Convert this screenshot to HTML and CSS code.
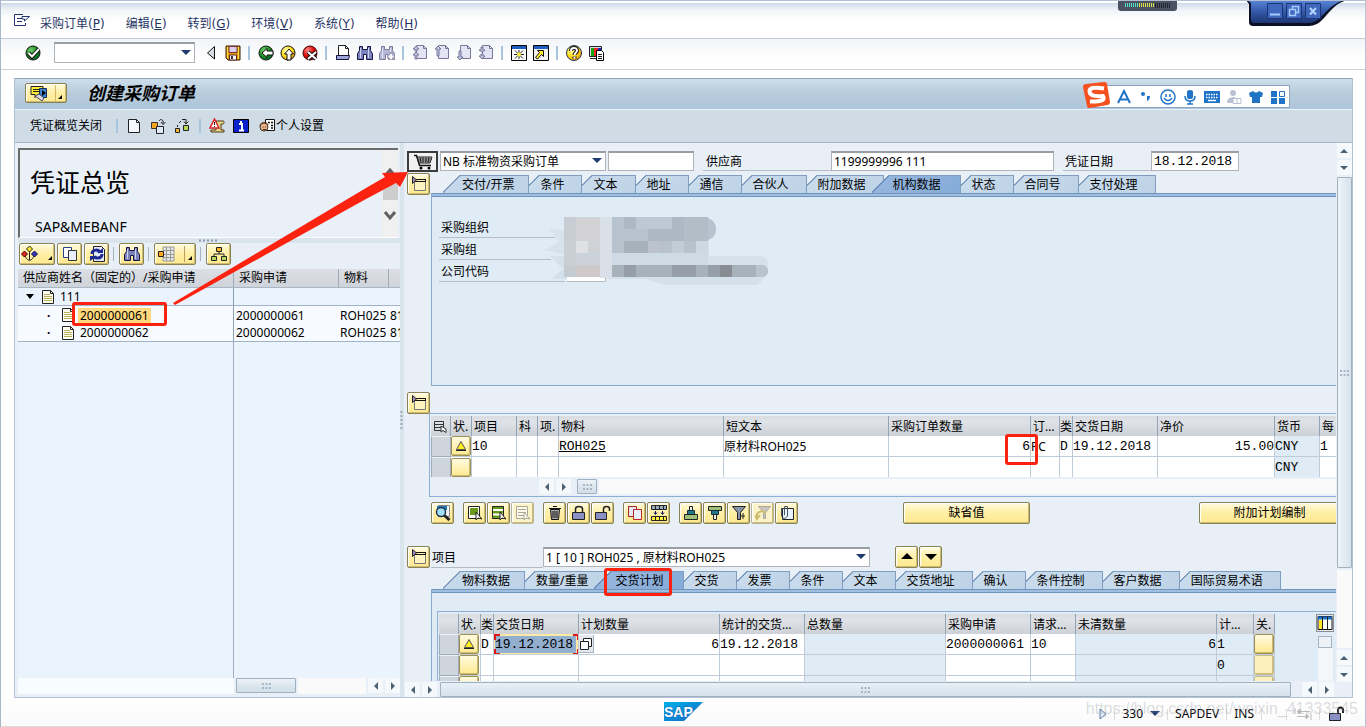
FILE: index.html
```html
<!DOCTYPE html>
<html lang="zh-CN">
<head>
<meta charset="utf-8">
<title>创建采购订单</title>
<link rel="stylesheet" href="styles.css">
</head>
<body>
<svg class="defs" aria-hidden="true">
  <defs>
    <radialGradient id="gG" cx=".35" cy=".3" r=".8"><stop offset="0" stop-color="#6fd06f"/><stop offset=".6" stop-color="#16861c"/><stop offset="1" stop-color="#063"/></radialGradient>
    <radialGradient id="gY" cx=".35" cy=".3" r=".8"><stop offset="0" stop-color="#fffbb0"/><stop offset=".5" stop-color="#ffe11a"/><stop offset="1" stop-color="#e08a00"/></radialGradient>
    <radialGradient id="gR" cx=".35" cy=".3" r=".8"><stop offset="0" stop-color="#ff8a8a"/><stop offset=".5" stop-color="#e01010"/><stop offset="1" stop-color="#900"/></radialGradient>
    <linearGradient id="gWin" x2="0" y2="1"><stop offset="0" stop-color="#5a87d8"/><stop offset=".5" stop-color="#3459a8"/><stop offset="1" stop-color="#1e3673"/></linearGradient>
    <linearGradient id="gSap" x2="1" y2="1"><stop offset="0" stop-color="#00b1eb"/><stop offset="1" stop-color="#1568be"/></linearGradient>
    <symbol id="folder" viewBox="0 0 16 16"><path d="M3.500 5.500h11v9h-11z" fill="#fdf3c0" stroke="#777"/><path d="M5 3.500h10M3 5.500h12M14.500 3v3" stroke="#111"/><path d="M1.500.500v7l4-3.500z" fill="#a58bb8" stroke="#222"/></symbol>
    <symbol id="page" viewBox="0 0 14 14"><path d="M1.500.5h8l3 3v10h-11z" fill="#fffef0" stroke="#222"/><path d="M3 4.500h6M3 6.500h8M3 8.500h8M3 10.500h8" stroke="#b8ae5c"/><path d="M9.500.5v3h3" fill="none" stroke="#222"/></symbol>
    <symbol id="warn" viewBox="0 0 12 12"><path d="M6 1.500L10.500 9.500h-9z" fill="#ffee20" stroke="#555" stroke-linejoin="round"/><path d="M1 10.500h10" stroke="#222"/></symbol>
    <symbol id="bino" viewBox="0 0 16 16"><path d="M2.500 1.500h3v3h5v-3h3v4l2 3v6h-6v-5h-3v5h-6v-6l2-3z" fill="#7c83b8" stroke="#15154a"/><path d="M3.500 3v10M11.500 3v10" stroke="#ccd2f2"/></symbol>
    <symbol id="copy" viewBox="0 0 16 16"><path d="M1.500 1.500h8v10h-8z" fill="#fff" stroke="#24428a"/><path d="M6.500 4.500h8v10h-8z" fill="#e8eefc" stroke="#333"/></symbol>
    <symbol id="copyr" viewBox="0 0 16 16"><path d="M1.500 1.500h8v10h-8z" fill="#e3e6f3" stroke="#a22"/><path d="M6.500 4.500h8v10h-8z" fill="#e9effc" stroke="#b22"/></symbol>
    <symbol id="sheet" viewBox="0 0 16 16"><path d="M4.500.500h7l3 3v10h-10z" fill="#e4e4f4" stroke="#77779a"/><path d="M11.500.500v3h3" fill="none" stroke="#77779a"/></symbol>
    <symbol id="left" viewBox="0 0 14 14"><path d="M9 3v8L5 7z" fill="#4d6272"/></symbol>
    <symbol id="right" viewBox="0 0 14 14"><path d="M5 3v8l4-4z" fill="#4d6272"/></symbol>
    <symbol id="up" viewBox="0 0 14 14"><path d="M3 9h8L7 5z" fill="#4d6272"/></symbol>
    <symbol id="down" viewBox="0 0 14 14"><path d="M3 5h8L7 9z" fill="#4d6272"/></symbol>
    <symbol id="caret" viewBox="0 0 10 6"><path d="M0 0h10L5 5z" fill="#203a72"/></symbol>
    <symbol id="grip" viewBox="0 0 9 6"><path d="M0 1h9M0 5h9" stroke="#a5b5c3" stroke-width="2" stroke-dasharray="2 1.500"/></symbol>
  </defs>
</svg>

<nav class="menubar">
  <svg class="exit" viewBox="0 0 16 13"><path d="M9 .5H.5v11h11V9M3 4.500h7M3 7.500h5" fill="none" stroke="#22366c"/><path d="M8 2.500h7.500L10.500 7V5H8z" fill="#fff" stroke="#22366c"/></svg>
  <a href="#">采购订单(<u>P</u>)</a><a href="#">编辑(<u>E</u>)</a><a href="#">转到(<u>G</u>)</a><a href="#">环境(<u>V</u>)</a><a href="#">系统(<u>Y</u>)</a><a href="#">帮助(<u>H</u>)</a>
</nav>

<div class="toolbar">
  <button class="ic" aria-label="确认"><svg viewBox="0 0 16 16"><circle cx="8" cy="8" r="7" fill="url(#gG)" stroke="#111"/><path d="M3.500 8l3.500 3.500L14 4" fill="none" stroke="#111" stroke-width="4"/><path d="M3.500 8l3.500 3.500L14 4" fill="none" stroke="#fff" stroke-width="2"/></svg></button>
  <span class="combo cmd"><input aria-label="命令"><svg class="arr"><use href="#caret"/></svg></span>
  <button class="ic" aria-label="收起"><svg viewBox="0 0 16 16"><path d="M11.500 1.500v12.500L4.500 8z" fill="#d8dde4" stroke="#111"/></svg></button>
  <button class="ic" aria-label="保存"><svg viewBox="0 0 16 16"><path d="M1 1h14v14H3l-2-2z" fill="#e79a12" stroke="#3a1d00"/><path d="M4 1.500h8v6H4z" fill="#dcd0ee" stroke="#733"/><path d="M4.500 10h7v5h-7z" fill="#fff" stroke="#522"/><path d="M6 11h2v3H6z" fill="#333"/><path d="M2.500 2v11M13.500 2v12" stroke="#ffe34a"/></svg></button>
  <i class="sep"></i>
  <button class="ic" aria-label="返回"><svg viewBox="0 0 16 16"><circle cx="8" cy="8" r="7" fill="url(#gG)" stroke="#111"/><path d="M4 8l5-4.500v2.500h6v4H9v2.500z" fill="#fff" stroke="#111"/></svg></button>
  <button class="ic" aria-label="退出"><svg viewBox="0 0 16 16"><circle cx="8" cy="8" r="7" fill="url(#gY)" stroke="#111"/><path d="M9 4l4.500 5H11v6H7V9H4.500z" fill="#fff" stroke="#111"/></svg></button>
  <button class="ic" aria-label="取消"><svg viewBox="0 0 16 16"><circle cx="8" cy="8" r="7" fill="url(#gR)" stroke="#400"/><path d="M6 7l8 7M14 7l-8 7" stroke="#111" stroke-width="4"/><path d="M6 7l8 7M14 7l-8 7" stroke="#fff" stroke-width="2"/></svg></button>
  <i class="sep"></i>
  <button class="ic" aria-label="打印"><svg viewBox="0 0 16 16"><path d="M3.500.500h7l3 3v7h-10z" fill="#fff" stroke="#222"/><path d="M10.500.500v3h3" fill="none" stroke="#222"/><path d="M1.500 10.500h13l-1 4h-12z" fill="#9fa5dc" stroke="#15153a"/></svg></button>
  <button class="ic" aria-label="查找"><svg><use href="#bino"/></svg></button>
  <button class="ic dim" aria-label="查找下一个"><svg viewBox="0 0 16 16"><use href="#bino" width="16" height="16"/><path d="M12 7v8M8 11.500h8" stroke="#558" stroke-width="4"/><path d="M12 9v5M9.500 11.500h5" stroke="#fff" stroke-width="2"/></svg></button>
  <i class="sep"></i>
  <button class="ic" aria-label="第一页"><svg viewBox="0 0 16 16"><use href="#sheet" width="16" height="16"/><path d="M4 1l3 3H5v2H3V4H1zM4 7l3 3H5v4H3v-4H1z" fill="#c4c4de" stroke="#77779a"/></svg></button>
  <button class="ic" aria-label="上一页"><svg viewBox="0 0 16 16"><use href="#sheet" width="16" height="16"/><path d="M4 1l3 3H5v7H3V4H1z" fill="#c4c4de" stroke="#77779a"/></svg></button>
  <button class="ic" aria-label="下一页"><svg viewBox="0 0 16 16"><use href="#sheet" width="16" height="16"/><path d="M4 15l3-3H5V6H3v6H1z" fill="#c4c4de" stroke="#77779a"/></svg></button>
  <button class="ic" aria-label="最后一页"><svg viewBox="0 0 16 16"><use href="#sheet" width="16" height="16"/><path d="M4 14l3-3H5V9H3v2H1zM4 7l3-2H5V2H3v3H1z" fill="#c4c4de" stroke="#77779a"/></svg></button>
  <i class="sep"></i>
  <button class="ic" aria-label="新会话"><svg viewBox="0 0 16 16"><path d="M.5.5h15v15H.5z" fill="#fff" stroke="#000"/><path d="M1 1h14v3H1z" fill="#1c5fc0"/><path d="M8 5v9M3 9.500h10M4 5.500l8 8M12 5.500l-8 8" stroke="#222"/><circle cx="8" cy="9.500" r="2" fill="#ffef3a"/></svg></button>
  <button class="ic" aria-label="快捷方式"><svg viewBox="0 0 16 16"><path d="M.5.5h15v15H.5z" fill="#f2f2f2" stroke="#000"/><path d="M1 1h14v3H1z" fill="#1c5fc0"/><path d="M4.500 5.500h6v6L8.500 9.500 4.500 14l-2-1.500L6.500 7.500z" fill="#ffee30" stroke="#111"/></svg></button>
  <i class="sep"></i>
  <button class="ic" aria-label="帮助"><svg viewBox="0 0 16 16"><circle cx="8" cy="8" r="7.500" fill="url(#gY)" stroke="#24355c"/><path d="M5 6c0-4 6-4 6-.5C11 8 8.500 7.500 8.500 10M8.500 11.500v2" fill="none" stroke="#111" stroke-width="4"/><path d="M5 6c0-4 6-4 6-.5C11 8 8.500 7.500 8.500 10M8.500 11.500v2" fill="none" stroke="#fff" stroke-width="2"/></svg></button>
  <button class="ic" aria-label="自定义布局"><svg viewBox="0 0 16 16"><path d="M1.500 1.500h12v10h-12zM2 13.500h8" fill="#ddd" stroke="#222"/><path d="M3 3h3v8H3z" fill="#12a512"/><path d="M6 3h4v8H6z" fill="#e22"/><path d="M10 3h3v8h-3z" fill="#22c"/><path d="M8.500 5.500h5l2 2v8h-7z" fill="#fff" stroke="#000"/><path d="M10 9.500h4M10 11.500h4M10 13.500h4" stroke="#222"/></svg></button>
</div>

<main class="panel">
  <header class="titlebar">
    <button class="yb svc" aria-label="服务"><svg viewBox="0 0 32 16"><path d="M1 1.500h12v8H8l-3 3v-3H1z" fill="#ffee35" stroke="#222"/><path d="M3 4.500h8M3 6.500h6" stroke="#222"/><path d="M9.500 3.500h7v9h-7z" fill="#4085cc" stroke="#13305a"/><path d="M12 5l4 3-4 3z"/><path d="M5 11l4-2 5 4-2 3z" fill="#ddd" stroke="#446"/><path d="M25.500 0v16" stroke="#d2b767"/><path d="M32 10v4h-4z"/></svg></button>
    <h1>创建采购订单</h1>
  </header>
  <div class="appbar">
    <button class="flat">凭证概览关闭</button><i class="sep s-a"></i>
    <button class="ic" aria-label="新建"><svg viewBox="0 0 16 16"><path d="M2.500 1.500h8l3 3v10h-11z" fill="#f4f8ff" stroke="#222"/><path d="M10.500 1.500v3h3" fill="none" stroke="#222"/></svg></button>
    <button class="ic" aria-label="其它凭证"><svg viewBox="0 0 16 16"><path d="M1.500 4.500h6v6h-6z" fill="#f4a51d" stroke="#432"/><path d="M6.500 8.500h7v7h-7z" fill="#dce9f8" stroke="#222"/><path d="M9 3c2-3 5-1 4 3M11 4l2 2.500L15.500 4" fill="none" stroke="#222"/></svg></button>
    <button class="ic" aria-label="层次"><svg viewBox="0 0 16 16"><path d="M1.500 10.500h4v4h-4z" fill="#f9b52a" stroke="#222"/><path d="M9.500 7.500h5v5h-5z" fill="#b6d858" stroke="#222"/><path d="M3.500 9V7M5 5l2-2M8 1.500h4v4M10 3.500l2 2.500 2.500-2.500" fill="none" stroke="#222"/></svg></button>
    <i class="sep s-b"></i>
    <button class="ic" aria-label="消息"><svg viewBox="0 0 16 16"><path d="M7 3h7c2 0 1 3 0 3h-2v6h3v2H2v-2h5z" fill="#e9d68c" stroke="#4d3a12"/><path d="M5.500 1L10 10H1z" fill="#fff" stroke="#d22" stroke-width="1.500"/><path d="M5.500 4v3M5.500 8v1" stroke="#222"/></svg></button>
    <button class="ic" aria-label="信息"><svg viewBox="0 0 16 16"><path d="M.5 1.500h15v13H.5z" fill="#0a22cc" stroke="#000"/><path d="M6 6h3v6M6 12.500h5M7 4h2" fill="none" stroke="#fff" stroke-width="2"/></svg></button>
    <button class="ic set" aria-label="个人设置"><svg viewBox="0 0 16 16"><path d="M6.500 1.500h9v11h-9z" fill="#fff" stroke="#111"/><path d="M9 4.500h2M12 4.500h2M12 7.500h2M12 10h2" stroke="#111" stroke-width="1.500"/><circle cx="5" cy="9" r="4" fill="#e9b489" stroke="#432"/><path d="M1 8c0-4 7-5 8-1M3.500 9h1M6 9h1M4 11.500h3" fill="none" stroke="#532"/></svg></button>
    <button class="flat">个人设置</button>
  </div>

  <div class="work">
    <section class="overview">
      <div class="htmlbox">
        <div><h2>凭证总览</h2><p>SAP&amp;MEBANF</p></div>
        <div class="winscroll"><svg viewBox="0 0 16 90"><path d="M1 34h15v16H1z" fill="#cdcdcd"/><path d="M3 26l5-6 5 6M3 62l5 6 5-6" fill="none" stroke="#606060" stroke-width="3"/></svg></div>
      </div>
      <div class="dots"><svg viewBox="0 0 20 3"><path d="M0 1.500h20" stroke="#8a9aab" stroke-width="2" stroke-dasharray="2 2"/></svg></div>
      <div class="treebar">
        <button class="yb w36" aria-label="选择变式"><svg viewBox="0 0 32 16"><path d="M8.500 5v9M4 9c0 4 4.500 5.500 4.500 5.500S13 13 13 9" fill="none" stroke="#222"/><path d="M8.500 0l3 3-3 3-3-3z" fill="#ffe82a" stroke="#222"/><path d="M3.500 5l3 3-3 3-3-3z" fill="#d22" stroke="#400"/><path d="M13.500 5l3 3-3 3-3-3z" fill="#33b" stroke="#114"/><path d="M31 10v4h-4z"/></svg></button>
        <button class="yb w25" aria-label="复制"><svg><use href="#copy"/></svg></button>
        <button class="yb w25" aria-label="刷新"><svg viewBox="0 0 16 16"><path d="M4.500.500h8l3 3v12h-11z" fill="#e4ecfc" stroke="#222"/><path d="M3 8c0-5 7-5 8-1M13 8c0 5-7 5-8 2" fill="none" stroke="#1c2a92" stroke-width="3"/><path d="M8 7h6V2zM8 10H1v5z" fill="#1c2a92"/></svg></button>
        <i class="sep"></i>
        <button class="yb w25" aria-label="查找"><svg><use href="#bino"/></svg></button>
        <i class="sep"></i>
        <button class="yb w42" aria-label="布局"><svg viewBox="0 0 34 16"><path d="M5 1h11v14H5zM5 4.500h11M5 8.500h11M5 11.500h11M8.500 1v14M12.500 1v14" fill="#e6e6e6" stroke="#999"/><path d="M.5 5.500h5v5h-5z" fill="#ffa820" stroke="#222"/><path d="M26.500 0v16" stroke="#b9a05a"/><path d="M34 10v4h-4z"/></svg></button>
        <i class="sep"></i>
        <button class="yb w25" aria-label="层次结构"><svg viewBox="0 0 16 16"><path d="M8 5v3M3 11V8h10v3" fill="none" stroke="#222"/><path d="M5.500 1.500h5v4h-5z" fill="#ffb52a" stroke="#222"/><path d="M.5 10.500h5v4h-5zM10.500 10.500h5v4h-5z" fill="#b6d858" stroke="#222"/></svg></button>
      </div>
      <div class="treewrap">
        <table class="tree">
          <colgroup><col class="t1"><col class="t2"><col class="t3"><col class="t4"></colgroup>
          <thead><tr><th>供应商姓名（固定的）/采购申请</th><th>采购申请</th><th>物料</th><th></th></tr></thead>
          <tbody>
            <tr class="grp"><td><span class="n1"><svg class="tw" viewBox="0 0 8 5"><path d="M0 0h8L4 5z"/></svg><svg class="pg"><use href="#page"/></svg>111</span></td><td></td><td></td><td></td></tr>
            <tr><td><span class="n2"><b>·</b><svg class="pg"><use href="#page"/></svg><mark>2000000061</mark></span></td><td>2000000061</td><td>ROH025</td><td>81</td></tr>
            <tr class="last"><td><span class="n2"><b>·</b><svg class="pg"><use href="#page"/></svg><span class="nm">2000000062</span></span></td><td>2000000062</td><td>ROH025</td><td>81</td></tr>
          </tbody>
        </table>
        <div class="treefill"></div>
      </div>
      <div class="hs treehs"><span class="blank"></span><span class="thumb"><svg class="grip"><use href="#grip"/></svg></span><span class="track"></span><button aria-label="向左"><svg><use href="#left"/></svg></button><button aria-label="向右"><svg><use href="#right"/></svg></button></div>
    </section>

    <div class="splitter"><svg viewBox="0 0 3 18"><path d="M1.500 0v18" stroke="#9ba9b6" stroke-width="2" stroke-dasharray="2 2"/></svg></div>

    <section class="detail">
      <div class="content">
        <div class="headrow">
          <button class="cart" aria-label="采购"><svg viewBox="0 0 20 16"><path d="M1 1.500h2.500L6.500 11.500H18" fill="none" stroke="#111" stroke-width="1.500"/><path d="M4 3h15l-2 6H6zM4.500 5h14M5 7h12.500M7 3l1 6M10 3v6M13 3v6M16 3l-1 6" fill="none" stroke="#222"/><circle cx="8" cy="14" r="1.500"/><circle cx="16" cy="14" r="1.500"/></svg></button>
          <span class="combo typ"><select aria-label="订单类型"><option>NB 标准物资采购订单</option></select><svg class="arr"><use href="#caret"/></svg></span>
          <input class="f-no" aria-label="凭证编号">
          <label class="lb l-v" for="vendor">供应商</label><input id="vendor" class="f-v" value="1199999996 111">
          <label class="lb l-d" for="date">凭证日期</label><input id="date" class="f-d mono" value="18.12.2018">
        </div>

        <div class="sec s1">
          <button class="yb fold" aria-label="折叠抬头"><svg><use href="#folder"/></svg></button>
          <div class="tabs">
            <button class="tab first">交付/开票</button><button class="tab">条件</button><button class="tab">文本</button><button class="tab">地址</button><button class="tab">通信</button><button class="tab">合伙人</button><button class="tab">附加数据</button><button class="tab on">机构数据</button><button class="tab">状态</button><button class="tab">合同号</button><button class="tab">支付处理</button>
          </div>
          <div class="tp org">
            <div class="labels"><span>采购组织</span><span>采购组</span><span>公司代码</span></div>
            <svg class="mosaic" viewBox="0 0 230 72" aria-hidden="true">
              <path d="M4 12q20 4 30 2h130v35H60L0 34l14-8z" fill="#d7e3ec"/><path d="M5 40h210q8 0 8 9t-10 20H120l-20-6H6l12-10z" fill="#d5e1ea"/>
              <path d="M22 60h38v5H22z" fill="#fff"/><path d="M22 65.500h38.500V60" fill="none" stroke="#b5b9bd"/>
              <path d="M19 1h12v24H19z" fill="#c8cdd3"/><path d="M31 1h24v24H31z" fill="#d2d2d5"/><path d="M55 1h12v61H55z" fill="#dae0e7"/>
              <path d="M67 1h92q12 2 12 12t-12 12H67z" fill="#b7c3ce"/><path d="M79 1h12v12H79zM127 1h12v24h-12zM103 13h24v12h-24z" fill="#adb8c4"/><path d="M91 1h36v12H91z" fill="#bcc8d3"/><path d="M139 1h24v24h-24z" fill="#b3bdc7"/>
              <path d="M19 25h12v24H19z" fill="#c9cfd5"/><path d="M31 25h12v12H31z" fill="#e0e1e4"/><path d="M43 25h12v12H43z" fill="#cfd3d8"/><path d="M31 37h24v12H31z" fill="#cbd2da"/>
              <path d="M67 25h84v12H67z" fill="#b7c2cd"/><path d="M79 25h24v12H79z" fill="#a7b1bc"/><path d="M103 25h12v12h-12z" fill="#bdc3ce"/><path d="M127 25h12v12h-12z" fill="#c1ccd7"/><path d="M151 25h12v12h-12z" fill="#ccd8e2"/>
              <path d="M67 37h96v12H67z" fill="#cedae4"/>
              <path d="M19 49h12v12H19z" fill="#c4cbd1"/><path d="M31 49h24v12H31z" fill="#cecaca"/>
              <path d="M67 49h144q12 0 12 6t-12 6H67z" fill="#a8b2bb"/><path d="M79 49h12v12H79zM127 49h24v12h-24zM163 49h12v12h-12z" fill="#969ea7"/><path d="M175 49h12v12h-12z" fill="#888d94"/><path d="M211 49h8q4 2 4 6t-4 6h-8z" fill="#b8c3cd"/>
            </svg>
          </div>
        </div>

        <div class="sec s2">
          <button class="yb fold" aria-label="折叠项目概览"><svg><use href="#folder"/></svg></button>
          <div class="itembox">
            <table class="grid items">
              <colgroup><col class="c20"><col class="c21"><col class="c45"><col class="c21"><col class="c21"><col class="c165"><col class="c165"><col class="c142"><col class="c29"><col class="c13"><col class="c85"><col class="c117"><col class="c45"><col class="c40"></colgroup>
              <thead><tr><th><svg class="selall" viewBox="0 0 14 14"><path d="M1.500 1.500h9v9h-9zM1 4.500h10M1 7.500h10" fill="none" stroke="#333"/><path d="M8 6v6l2-1.500 3 2V9z" fill="#fff" stroke="#333"/></svg></th><th>状.</th><th>项目</th><th>科</th><th>项.</th><th>物料</th><th>短文本</th><th>采购订单数量</th><th>订…</th><th class="nar">类</th><th>交货日期</th><th>净价</th><th>货币</th><th>每</th></tr></thead>
              <tbody>
                <tr><td class="rs"></td><td class="bt"><button class="cell" aria-label="警告"><svg><use href="#warn"/></svg></button></td><td>10</td><td></td><td></td><td><a href="#">ROH025</a></td><td class="sans">原材料ROH025</td><td class="num">6</td><td class="sans">PC</td><td>D</td><td>19.12.2018</td><td class="num">15.00</td><td class="ro">CNY</td><td>1</td></tr>
                <tr><td class="rs"></td><td class="bt"><button class="cell" aria-label="状态"></button></td><td></td><td></td><td></td><td></td><td></td><td></td><td></td><td></td><td></td><td></td><td class="ro">CNY</td><td></td></tr>
              </tbody>
            </table>
            <div class="hs itemhs"><button aria-label="向左"><svg><use href="#left"/></svg></button><button aria-label="向右"><svg><use href="#right"/></svg></button><span class="thumb"><svg class="grip"><use href="#grip"/></svg></span><span class="track"></span></div>
            <span class="red r-qty"></span>
          </div>
        </div>

        <div class="btnrow">
          <button class="yb" aria-label="详细"><svg viewBox="0 0 16 16"><path d="M3.500.500h11v11h-11z" fill="#f5f5f5" stroke="#888"/><path d="M2 1h10v4H2z" fill="#27b"/><circle cx="6" cy="7" r="4.500" fill="#9fe0fa" stroke="#234" stroke-width="1.500"/><path d="M9.500 10.500l5 4.500" stroke="#222" stroke-width="3"/></svg></button>
          <span class="g"><button class="yb" aria-label="全选"><svg viewBox="0 0 16 16"><path d="M1.500 1.500h11v12h-11z" fill="#fff" stroke="#222"/><path d="M3 3h8v7H3z" fill="#6a9a1c"/><path d="M9 7v8l2-2 4 1z" fill="#fff" stroke="#222"/></svg></button><button class="yb" aria-label="选择块"><svg viewBox="0 0 16 16"><path d="M1.500 1.500h11v12h-11z" fill="#6a9a1c" stroke="#222"/><path d="M2 5h10M2 9.500h10" stroke="#fff" stroke-width="2"/><path d="M9 7v8l2-2 4 1z" fill="#fff" stroke="#222"/></svg></button><button class="yb off" aria-label="取消选择"><svg viewBox="0 0 16 16"><path d="M1.500 1.500h11v12h-11zM3 4.500h8M3 7.500h8M3 10.500h8" fill="#fff" stroke="#777"/><path d="M9 7v8l2-2 4 1z" fill="#fff" stroke="#777"/></svg></button></span>
          <span class="g"><button class="yb" aria-label="删除"><svg viewBox="0 0 16 16"><path d="M3.500 4.500h9l-1 10h-7z" fill="#aaa" stroke="#111"/><path d="M2 3.500h12M6 1.500h4M6 6v7M8 6v7M10 6v7" stroke="#111"/></svg></button><button class="yb" aria-label="锁定"><svg viewBox="0 0 16 16"><path d="M4.500 7V4q0-2.500 3.500-2.500T11.500 4v3" fill="none" stroke="#222" stroke-width="1.500"/><path d="M1.500 7.500h12v7h-12z" fill="#8a8fc4" stroke="#222"/></svg></button><button class="yb" aria-label="解锁"><svg viewBox="0 0 16 16"><path d="M8.500 7V4q0-2.500 3-2.500t3 2.500v2" fill="none" stroke="#222" stroke-width="1.500"/><path d="M.5 7.500h11v7H.5z" fill="#8a8fc4" stroke="#222"/></svg></button></span>
          <span class="g"><button class="yb" aria-label="复制"><svg><use href="#copyr"/></svg></button><button class="yb" aria-label="插入"><svg viewBox="0 0 16 16"><path d="M.5.500h15v4H.5z" fill="#9ab" stroke="#222"/><path d="M4.500 1v3M8.500 1v3M12.500 1v3" stroke="#222"/><path d="M.5 11.500h15v4H.5z" fill="#ffee40" stroke="#222"/><path d="M4.500 12v3M8.500 12v3M12.500 12v3" stroke="#222"/><path d="M4.500 6v3M3 7.500L4.500 9.500 6 7.500M11.500 6v3M10 7.500l1.500 2 1.500-2" fill="none" stroke="#116"/></svg></button></span>
          <span class="g"><button class="yb" aria-label="升序"><svg viewBox="0 0 16 16"><path d="M6.500 1.500h3v4h-3z" fill="#eee" stroke="#222"/><path d="M4.500 5.500h7v4h-7z" fill="#278" stroke="#134"/><path d="M1.500 9.500h13v5h-13z" fill="#9fc07a" stroke="#222"/></svg></button><button class="yb" aria-label="降序"><svg viewBox="0 0 16 16"><path d="M1.500 1.500h13v4h-13z" fill="#9fc07a" stroke="#222"/><path d="M4.500 5.500h7v4h-7z" fill="#278" stroke="#134"/><path d="M6.500 9.500h3v5h-3z" fill="#eee" stroke="#222"/></svg></button><button class="yb" aria-label="过滤"><svg viewBox="0 0 16 16"><path d="M1.500 1.500h13l-5 6v7h-3v-7z" fill="#8a94a8" stroke="#222"/><path d="M12 8v6M10 11h4" stroke="#222"/></svg></button><button class="yb off" aria-label="取消过滤"><svg viewBox="0 0 16 16"><path d="M3.500 1.500h12l-5 6v6h-2v-6z" fill="#aab" stroke="#777"/><path d="M2 13V9q4-5 9-1M0 10l2 4 3-4" fill="none" stroke="#b09a30" stroke-width="2"/></svg></button><button class="yb" aria-label="附件"><svg viewBox="0 0 16 16"><path d="M3.500 3.500h11v11h-11z" fill="#e8f2fa" stroke="#222"/><path d="M2.500 3v8l3 3 3-3V1.500h-3V10" fill="none" stroke="#456"/></svg></button></span>
          <button class="yb txt def">缺省值</button><button class="yb txt add">附加计划编制</button>
        </div>

        <div class="sec s3">
          <button class="yb fold" aria-label="折叠项目"><svg><use href="#folder"/></svg></button>
          <div class="itemsel"><label class="lb l-i" for="item">项目</label><span class="combo it"><select id="item"><option>1 [ 10 ] ROH025 , 原材料ROH025</option></select><svg class="arr"><use href="#caret"/></svg></span>
            <button class="yb prev" aria-label="上一项"><svg viewBox="0 0 16 16"><path d="M2 10h12L8 4z"/></svg></button><button class="yb" aria-label="下一项"><svg viewBox="0 0 16 16"><path d="M2 5h12l-6 6z"/></svg></button></div>
          <div class="tabs">
            <button class="tab first">物料数据</button><button class="tab">数量/重量</button><button class="tab on">交货计划<span class="red r-tab"></span></button><button class="tab">交货</button><button class="tab">发票</button><button class="tab">条件</button><button class="tab">文本</button><button class="tab">交货地址</button><button class="tab">确认</button><button class="tab">条件控制</button><button class="tab">客户数据</button><button class="tab">国际贸易术语</button>
          </div>
          <div class="tp sched">
            <div class="schedbox">
              <table class="grid lines">
                <colgroup><col class="c20"><col class="c22"><col class="c13"><col class="c85"><col class="c141"><col class="c85"><col class="c141"><col class="c85"><col class="c45"><col class="c141"><col class="c37"><col class="c21"></colgroup>
                <thead><tr><th></th><th>状.</th><th class="nar">类</th><th>交货日期</th><th>计划数量</th><th>统计的交货…</th><th>总数量</th><th>采购申请</th><th>请求…</th><th>未清数量</th><th>计…</th><th>关.</th></tr></thead>
                <tbody>
                  <tr><td class="rs"></td><td class="bt"><button class="cell" aria-label="警告"><svg><use href="#warn"/></svg></button></td><td>D</td><td class="act"><input class="mono" aria-label="交货日期" value="19.12.2018"><svg class="corners" viewBox="0 0 85 21"><path d="M1 6V1h5M79 1h5v5M84 15v5h-5M6 20H1v-5" fill="none" stroke="#e01818" stroke-width="2"/></svg></td><td class="num"><span class="f4"><svg viewBox="0 0 14 14"><path d="M4.500 1.500h8v8h-8z" fill="#fff" stroke="#222"/><path d="M1.500 4.500h8v8h-8z" fill="#fff" stroke="#222"/></svg></span>6</td><td>19.12.2018</td><td class="ro"></td><td>2000000061</td><td>10</td><td class="num ro">6</td><td class="ro">1</td><td class="bt ro"><button class="cell" aria-label="关闭"></button></td></tr>
                  <tr><td class="rs"></td><td class="bt"><button class="cell" aria-label="状态"></button></td><td></td><td></td><td></td><td></td><td class="ro"></td><td></td><td></td><td class="ro"></td><td class="ro">0</td><td class="bt ro"><button class="cell off" aria-label="关闭"></button></td></tr>
                  <tr><td class="rs"></td><td class="bt"><button class="cell" aria-label="状态"></button></td><td></td><td></td><td></td><td></td><td class="ro"></td><td></td><td></td><td class="ro"></td><td class="ro"></td><td class="bt ro"><button class="cell off" aria-label="关闭"></button></td></tr>
                </tbody>
              </table>
              <div class="side"><button class="cfg" aria-label="配置"><svg viewBox="0 0 16 16"><path d="M1 1.500h14v13H1z" fill="#fff" stroke="#111"/><path d="M1 1.500h14v3H1z" fill="#1d6fc8"/><path d="M2 5h3v9H2z" fill="#ffe52a"/><path d="M5.500 2v12M10.500 2v12" stroke="#222"/></svg></button><span class="knob"></span><span class="lane"></span></div>
            </div>
          </div>
        </div>
        <div class="hs mainhs"><button aria-label="向左"><svg><use href="#left"/></svg></button><button aria-label="向右"><svg><use href="#right"/></svg></button><span class="thumb"><svg class="grip"><use href="#grip"/></svg></span><button aria-label="向左"><svg><use href="#left"/></svg></button><button aria-label="向右"><svg><use href="#right"/></svg></button></div>
      </div>
      <div class="vs"><button aria-label="向上"><svg><use href="#up"/></svg></button><button aria-label="向下"><svg><use href="#down"/></svg></button><span class="thumb"><svg class="grip"><use href="#grip"/></svg></span><span class="track"></span><button aria-label="向上"><svg><use href="#up"/></svg></button><button aria-label="向下"><svg><use href="#down"/></svg></button></div>
    </section>
  </div>
</main>

<footer class="status">
  <span class="side-l"></span>
  <svg class="sap" viewBox="0 0 39 20" role="img" aria-label="SAP"><path d="M0 0h39L20 19H0z" fill="url(#gSap)"/><text x="0" y="15" font-size="14" font-weight="700" fill="#fff" stroke="#1568be" stroke-width="1" paint-order="stroke">SAP</text></svg>
  <div class="info"><svg class="play" viewBox="0 0 8 12"><path d="M1 1v10l6-5z" fill="#e4eef8" stroke="#5b7ca0"/></svg><i></i><span>330</span><svg class="dn"><use href="#caret"/></svg><i></i><span>SAPDEV</span><i></i><span>INS</span><i></i><i class="far"></i><svg class="ab" viewBox="0 0 18 12"><path d="M1 0v6M3 3.500h13M3 3.500l3-2.500v5zM17 6v6M15 8.500H3M15 8.500L12 6v5z" fill="#bbb" stroke="#bbb"/></svg><i></i><svg class="lk" viewBox="0 0 16 16"><path d="M9 7V4q0-2.500 2.500-2.500T14 4v3" fill="none" stroke="#222" stroke-width="2"/><path d="M.5 7.500h11v7H.5z" fill="#8a8fc4" stroke="#222"/></svg></div>
</footer>

<div class="watermark">https://blog.csdn.net/weixin_41333545</div>
<svg class="meter" viewBox="0 0 59 11"><path d="M0 0h59v8q0 3-3 3H3q-3 0-3-3z" fill="#4b5160"/><path d="M7 5h14" stroke="#55e0c8" stroke-width="4" stroke-dasharray="1 1"/><path d="M21 5h16" stroke="#d8e04a" stroke-width="4" stroke-dasharray="1 1"/><path d="M37 5.500h16" stroke="#232733" stroke-width="5" stroke-dasharray="1 1"/></svg>
<div class="winctl">
  <svg viewBox="0 0 104 28"><path d="M0 0h104c-14 1-20 12-27 19q-6 7-14 7H7q-4 0-4-4V4z" fill="#0b1024"/><path d="M1 0h99c-12 2-18 10-25 17q-6 6-12 6H8q-3 0-3-3V3z" fill="url(#gWin)"/><path d="M21.500 3.500h15v15h-15zM40.500 3.500h15v15h-15zM59.500 3.500h15v15h-15z" fill="#3f68bd" stroke="#1b3474"/><path d="M24 14.500h10" stroke="#a6cbff" stroke-width="2"/><path d="M46.500 9V6.500h6v6H50M43.500 9.500h6v6h-6z" fill="none" stroke="#a6cbff" stroke-width="1.500"/><path d="M64 8l6 6.500M70 8l-6 6.500" stroke="#b6d4ff" stroke-width="2"/></svg>
</div>
<div class="ime">
  <svg class="sogou" viewBox="0 0 30 28"><path d="M1 6q0-3 3-3L22 1q3 0 3 2l3 18q0 3-3 3L8 27q-3 0-3-2z" fill="#f5511e"/><path d="M22 7.500Q7 5 7.500 10.500T21 15q4 6-13 5.500" fill="none" stroke="#fff" stroke-width="4"/></svg>
  <svg viewBox="0 0 16 16"><path d="M2 14L8 2l6 12M4 10.500h8" fill="none" stroke="#1f74c8" stroke-width="2"/></svg>
  <svg viewBox="0 0 16 16"><circle cx="5" cy="5" r="2" fill="#1f74c8"/><path d="M9 7h3q0 4-3 5z" fill="#1f74c8"/></svg>
  <svg viewBox="0 0 16 16"><circle cx="8" cy="8" r="7" fill="none" stroke="#1f74c8" stroke-width="1.500"/><path d="M6 5v3M10 5v3M4 9q4 5 8 0" fill="none" stroke="#1f74c8" stroke-width="1.500"/></svg>
  <svg viewBox="0 0 16 16"><path d="M5 3q0-2 3-2t3 2v5q0 2-3 2T5 8z" fill="#1f74c8"/><path d="M3 7q0 5 5 5t5-5M8 12v3M5 15h6" fill="none" stroke="#1f74c8" stroke-width="1.500"/></svg>
  <svg viewBox="0 0 16 16"><path d="M0 2h16v12H0z" fill="#1f74c8"/><path d="M2 5.500h12M2 8.500h12" stroke="#fff" stroke-width="1.500" stroke-dasharray="1.500 1"/><path d="M4 11.500h8" stroke="#fff" stroke-width="1.500"/></svg>
  <svg viewBox="0 0 16 16"><circle cx="7" cy="4" r="3" fill="#b9c2d2"/><path d="M1 14q0-6 6-6 3 0 4 2v4z" fill="#b9c2d2"/><path d="M7 9.500h8v5H7zM11 9.500v5" fill="#fff" stroke="#b9c2d2"/></svg>
  <svg viewBox="0 0 16 16"><path d="M5 2q3 3 6 0l4 2-1 4h-2v6H4V8H2L1 4z" fill="#1f74c8"/></svg>
  <svg viewBox="0 0 16 16"><path d="M1 2h6v6H1zM1 9h6v6H1zM9 9h6v6H9z" fill="#1f74c8"/><path d="M9.500 2.500h5v5h-5z" fill="none" stroke="#1f74c8"/></svg>
</div>
<span class="red r-tree"></span>
<svg class="arrow" viewBox="0 0 236 136" aria-hidden="true"><path d="M1 133L194 18l19-11-3-4 26-1-8 15-4-4-30 16L3 135z" fill="#fb2210"/></svg>
</body>
</html>
```
FILE: styles.css
```css
* { box-sizing: border-box; }
html, body { height: 100%; }
body {
  margin: 0; display: flex; flex-direction: column; overflow: hidden; position: relative;
  font: 12px/16px "Noto Sans", "Noto Sans CJK SC", sans-serif; color: #000;
  background: #fff; border-left: 1px solid #aab6cb; border-right: 1px solid #b9c3d3; border-top: 1px solid #b4bfd1;
}
button, input, select { font: inherit; color: inherit; margin: 0; padding: 0; border: 0; background: none; border-radius: 0; }
button { display: inline-flex; align-items: center; justify-content: center; flex: none; white-space: nowrap; }
input, select { background: #fff; border: 1px solid #b0b4b8; border-top: 2px solid #999ea3; padding: 0 2px; min-width: 0; width: 100%; height: 20px; appearance: none; outline: 0; }
svg { display: block; flex: none; width: 16px; height: 16px; }
.defs { position: absolute; width: 0; height: 0; }
.mono { font-family: "Liberation Mono", monospace; font-size: 13px; }
a { color: inherit; }
.sep { flex: none; width: 2px; height: 14px; background: #a9c4de; }
.combo { display: grid; flex: none; }
.combo > * { grid-area: 1 / 1; }
.arr { width: 10px; height: 6px; place-self: center end; margin-right: 4px; pointer-events: none; }

.menubar { flex: none; height: 38px; padding: 8px 0 0 13px; display: flex; align-items: center; gap: 21px; background: linear-gradient(#fff 0 2px, #cdd9e8 2px, #f0f4f8 9px, #fff 20px); border-bottom: 1px solid #c5ccd5; color: #1f3465; }
.menubar a { text-decoration: none; line-height: 18px; font-family: "DejaVu Sans", "Noto Sans CJK SC", sans-serif; }
.exit { width: 16px; height: 13px; margin: 0 -11px 6px 0; }
.toolbar { flex: none; height: 31px; display: flex; align-items: center; padding: 0 0 3px 22px; gap: 6px; background: linear-gradient(#f2f5f8, #fff 20px); border-bottom: 1px solid #cdd2d9; }
.toolbar .ic { width: 18px; height: 18px; }
.toolbar .ic:nth-of-type(1) { width: 20px; }
.toolbar .sep { margin: 0 1px 0 0; }
.cmd { width: 141px; margin: 0 1px 0 5px; }
.cmd input { height: 21px; }
.toolbar .ic + .ic { margin-left: -2px; }
.dim { opacity: .55; }

.panel { flex: 1; min-height: 0; margin: 8px 12px 0 13px; display: flex; flex-direction: column; border: 1px solid #b3c2d4; border-top-color: #93a5bd; background: #e8eff6; }
.titlebar { flex: none; height: 31px; display: flex; align-items: center; gap: 20px; padding: 0 0 2px 10px; background: linear-gradient(#cddeec, #b7cbda 50%, #aec5dc); border-bottom: 1px solid #e8f3fa; }
.titlebar h1 { margin: 0; font-size: 18px; line-height: 24px; font-weight: 700; font-style: italic; }
.appbar { flex: none; height: 33px; display: flex; align-items: center; padding-left: 15px; gap: 7px; background: #cfdce6; border-bottom: 1px solid #a3b7c8; }
.s-a { margin-left: 7px; }
.s-b { margin-left: 2px; }
.appbar .ic { width: 17px; }
.appbar .set { margin: 0 -6px 0 2px; }
.flat { line-height: 18px; }

.yb { height: 22px; width: 23px; border: 1px solid #8b8254; border-radius: 2px; background: linear-gradient(#fffbe0, #ffefa8 45%, #ffe98f); box-shadow: inset -1px -1px #cdbb74, inset 1px 1px #fff; }
.yb.off { border-color: #b9b59c; background: #fdf3ca; }
.yb.off svg { opacity: .6; }
.svc { width: 42px; height: 20px; }
.svc svg { width: 32px; }

.work { flex: 1; min-height: 0; display: flex; }
.overview { flex: none; width: 385px; padding: 5px 0 2px 3px; display: flex; flex-direction: column; background: #e8eff6; }
.htmlbox { flex: none; height: 90px; margin-right: 2px; display: flex; justify-content: space-between; border-top: 2px solid #6b6b6b; border-left: 2px solid #6b6b6b; border-bottom: 1px solid #fff; background: #e9f0f7; }
.htmlbox h2 { margin: 16px 0 0 10px; font-size: 25px; line-height: 32px; font-weight: 400; }
.htmlbox p { margin: 20px 0 0 15px; font-size: 14px; line-height: 18px; }
.winscroll { width: 16px; background: #f0f0f0; overflow: hidden; }
.winscroll svg { height: 90px; }
.dots { flex: none; height: 5px; background: #d9e4ec; display: flex; align-items: center; justify-content: center; }
.dots svg { width: 20px; height: 3px; }
.treebar { flex: none; display: flex; align-items: center; gap: 2px; padding-left: 1px; }
.treebar .sep { background: #a8b4bf; width: 1px; margin: 0 3px 0 2px; }
.w25 { width: 25px; }
.w36 { width: 36px; }
.w42 { width: 42px; }
.w36 svg { width: 32px; }
.w42 svg { width: 34px; }
.treewrap { flex: 1; min-height: 0; margin-top: 4px; overflow: hidden; display: flex; flex-direction: column; background: #ebf3fc; }
.tree { table-layout: fixed; border-collapse: separate; border-spacing: 0; width: 420px; flex: none; }
.t1 { width: 216px; } .t2 { width: 105px; } .t3 { width: 50px; } .t4 { width: 49px; }
.tree th { height: 19px; padding: 0 0 0 5px; text-align: left; font-weight: 400; white-space: nowrap; line-height: 18px; background: linear-gradient(#dcdfe4, #cfd4da); border-right: 1px solid #9eabb8; border-bottom: 1px solid #a9b6c3; }
.tree td { height: 18px; padding: 0 0 0 2px; line-height: 17px; background: #f7fbff; white-space: nowrap; }
.tree td:first-child { border-right: 1px solid #8e9fb8; }
.tree td:nth-child(3) { padding-left: 1px; }
.tree td:nth-child(4) { padding-left: 1px; }
.tree .grp td { background: #ebf3fc; border-bottom: 1px solid #9fb3ca; }
.tree .last td { border-bottom: 1px solid #9fb3ca; }
.n1, .n2 { display: flex; align-items: center; height: 17px; }
.n1 { padding-left: 6px; }
.n2 { padding-left: 27px; }
.n2 b { width: 5px; }
.tw { width: 8px; height: 5px; }
.pg { width: 14px; height: 14px; margin: 0 5px 0 7px; }
.n2 .pg { margin-right: 3px; margin-left: 9px; }
mark { background: #ffd97c; padding: 0 2px; line-height: 15px; }
.nm { padding-left: 2px; }
.treefill { flex: 1; width: 216px; border-right: 1px solid #a7a9c4; }

.hs, .vs { display: flex; flex: none; gap: 2px; }
.hs { height: 16px; align-items: stretch; }
.hs button, .vs button { width: 15px; height: 15px; background: #f6f9fb; }
.hs button svg, .vs button svg { width: 14px; height: 14px; }
.thumb { flex: none; display: flex; align-items: center; justify-content: center; border: 1px solid #9fb0be; background: linear-gradient(#edf3f8, #dce6ee 50%, #d3dfe9); border-radius: 1px; }
.grip { width: 9px; height: 6px; }
.track { flex: 1; background: #fafafa; }
.blank { width: 216px; background: #f8fcff; }
.treehs .thumb { width: 60px; height: 15px; }
.treehs { margin-bottom: 1px; }

.splitter { flex: none; width: 4px; background: #d9e4ec; display: flex; align-items: center; }
.splitter svg { width: 3px; height: 18px; }

.detail { flex: 1; min-width: 0; display: flex; }
.content { flex: 1; min-width: 0; display: flex; flex-direction: column; overflow: hidden; }
.headrow { flex: none; display: flex; align-items: flex-start; padding: 8px 0 0 3px; }
.headrow > * { flex: none; }
.cart { width: 31px; height: 21px; border: 2px solid #3c3c3c; background: #f1f1f1; }
.cart svg { width: 20px; }
.typ { width: 166px; margin: 0 2px; }
.lb { border-bottom: 1px solid #b5bbc2; height: 20px; line-height: 21px; padding-left: 2px; }
.f-no { width: 86px; }
.l-v { width: 128px; margin-left: 9px; padding-left: 3px; }
.f-v { width: 223px; }
.l-d { width: 88px; margin-left: 9px; }
.f-d { width: 88px; }

.sec { flex: none; display: grid; grid-template-columns: 23px minmax(0, 1fr); column-gap: 1px; padding-left: 3px; }
.fold { height: 22px; align-self: start; }
.s1 { margin-top: 1px; grid-template-rows: 20px 193px; }
.s1 .tabs { margin-top: 2px; }
.s1 .tp { grid-column: 2; }
.tabs { display: flex; height: 18px; padding-left: 12px; }
.tab {
  position: relative; height: 18px; padding: 1px 17px 0 11px; border-right: 1px solid #7f9dbf;
  background:
    linear-gradient(#7f9dbf, #7f9dbf) 100% 0 / calc(100% - 10px) 1px no-repeat,
    linear-gradient(135deg, transparent 0 7px, #7f9dbf 7px 8px, #c9dced 8px, #bdd2e6);
}
.tab.first { padding: 1px 14px 0 19px; }
.tab.first, .tab.on {
  background:
    linear-gradient(#7f9dbf, #7f9dbf) 100% 0 / calc(100% - 17px) 1px no-repeat,
    linear-gradient(135deg, transparent 0 12px, #7f9dbf 12px 13px, #c5d9eb 13px, #bdd2e6);
}
.tab.on {
  margin-left: -12px; padding: 1px 19px 0 21px;
  background:
    linear-gradient(#7f9dbf, #7f9dbf) 100% 0 / calc(100% - 17px) 1px no-repeat,
    linear-gradient(135deg, transparent 0 12px, #6d90bb 12px 13px, #94b5dd 13px, #86abd8);
}
.tp { border-left: 1px solid #8aa8ca; border-bottom: 1px solid #8aa8ca; background: linear-gradient(#6f94be 0 1px, #a0bfe0 1px 3px, #6f94be 3px 4px, #dfebf5 4px); padding-top: 4px; min-width: 0; }
.org { display: flex; padding: 23px 0 0 7px; }
.labels { width: 106px; }
.labels span { display: block; height: 22px; width: 116px; padding: 3px 0 0 2px; line-height: 18px; border-bottom: 1px solid #b9bec4; }
.labels span:nth-child(2) { width: 112px; }
.labels span:nth-child(3) { width: 126px; }
.mosaic { width: 230px; height: 72px; }

.s2 { margin-top: 6px; grid-template-rows: 21px auto; }
.itembox { grid-column: 1 / 3; margin-left: 22px; position: relative; border: 1px solid #8fb0d4; border-right: 0; padding: 2px 0 2px 1px; overflow: visible; clip-path: inset(-20px 0 -20px 0); }
.grid { table-layout: fixed; border-collapse: separate; border-spacing: 0; flex: none; }
.items { width: 929px; }
.lines { width: 836px; }
.c13 { width: 13px; } .c20 { width: 20px; } .c21 { width: 21px; } .c22 { width: 22px; } .c29 { width: 29px; } .c37 { width: 37px; } .c40 { width: 40px; } .c45 { width: 45px; } .c85 { width: 85px; } .c117 { width: 117px; } .c141 { width: 141px; } .c142 { width: 142px; } .c165 { width: 165px; }
.grid th { height: 20px; padding: 2px 0 0 2px; overflow: hidden; text-align: left; font-weight: 400; line-height: 18px; white-space: nowrap; background: linear-gradient(#d9dce1, #dfe2e6 30%, #ccd1d7); border-right: 1px solid #93a4b6; }
.grid th.nar { padding-left: 0; }
.grid td { height: 21px; padding: 0; line-height: 19px; font-family: "Liberation Mono", "Noto Sans CJK SC", monospace; font-size: 13px; overflow: hidden; white-space: nowrap; background: #fff; border-right: 1px solid #c0cbd8; border-bottom: 1px solid #c0cbd8; }
.items tr:last-child td { height: 20px; border-bottom: 0; }
.grid td.sans { font: 12px/19px "Noto Sans", "Noto Sans CJK SC", sans-serif; }
.grid .num { text-align: right; }
.grid td.ro { background: #dfebf5; }
.grid td.rs { background: #cfd5dc; border: 1px solid #9fabb8; border-top-color: #eef1f4; }
.grid td.bt { padding: 0 1px 0 0; }
.cell { display: flex; width: 20px; height: 20px; border: 1px solid #9c8f56; border-radius: 2px; background: linear-gradient(#fffbe0, #ffe98f); box-shadow: inset -1px -1px #cdbb74; }
.items tr:last-child .cell { height: 19px; }
.cell.off { border-color: #c5bd95; background: #fdf0bf; }
.cell svg { width: 12px; height: 12px; }
.selall { width: 14px; height: 14px; }
.itemhs { margin: 2px 0 0 108px; height: 15px; }
.itemhs .thumb { width: 20px; margin-left: 4px; }

.btnrow { flex: none; display: flex; gap: 9px; padding: 5px 0 0 27px; }
.g { display: flex; gap: 1px; flex: none; }
.def { width: 127px; margin-left: 96px; }
.add { width: 141px; margin-left: 160px; }

.s3 { flex: 1; min-height: 0; margin-top: 22px; grid-template-rows: 25px 18px minmax(0, 1fr); }
.s3 .tabs, .s3 .tp { grid-column: 2; }
.itemsel { display: flex; align-items: flex-start; }
.l-i { width: 112px; height: 22px; line-height: 23px; padding-left: 1px; flex: none; }
.it { width: 327px; margin-top: 1px; }
.prev { margin: 0 1px 0 25px; }
.sched { padding: 22px 0 0 5px; overflow: hidden; border-bottom: 0; }
.schedbox { height: 100%; display: flex; justify-content: space-between; align-items: flex-start; border-top: 1px solid #8fb0d4; border-left: 1px solid #8fb0d4; padding: 2px 2px 0 1px; overflow: hidden; }
.act { position: relative; }
.grid td.act { background: #ffeaa5; }
.act input { width: 81px; height: 17px; margin: 1px; border: 0; padding: 0; background: #93afd0; display: block; }
.corners { position: absolute; inset: 0; width: 85px; height: 21px; pointer-events: none; }
.f4 { float: left; width: 15px; height: 18px; background: #e3e9ef; border-right: 1px solid #a9b3bd; border-bottom: 1px solid #a9b3bd; }
.f4 svg { width: 14px; height: 14px; margin-top: 2px; }
.side { display: flex; flex-direction: column; align-items: center; gap: 4px; height: 100%; }
.cfg { width: 18px; height: 18px; border: 1px solid #8a9099; background: #e9e9e9; }
.knob { width: 14px; height: 12px; border: 1px solid #a5b2bf; background: #edf2f7; flex: none; }
.lane { flex: 1; width: 15px; background: #f4f7f9; margin-top: -4px; }
.mainhs { height: 15px; padding: 0 2px 0 1px; margin-top: 1px; }
.mainhs .thumb { flex: 1; margin: 0 9px 0 1px; background: linear-gradient(#e8f0f7, #d5e1eb); }
.vs { width: 16px; flex-direction: column; align-items: center; padding-bottom: 15px; }
.vs .thumb { flex: 391; width: 15px; background: linear-gradient(90deg, #eef4f9, #d6e2ec); }
.vs .track { flex: 78; width: 15px; }

.status { flex: none; height: 29px; display: grid; grid-template-columns: 1fr auto 1fr; align-items: center; background: linear-gradient(#fff, #fafafa); border-bottom: 1px solid #dcdcdc; }
.sap { width: 39px; height: 20px; font-family: "Liberation Sans", sans-serif; }
.info { justify-self: end; display: flex; align-items: center; gap: 7px; margin: 4px 20px 0 0; }
.info i { width: 1px; height: 11px; background: #ddd; }
.info .far { margin-left: 17px; }
.play { width: 8px; height: 12px; }
.dn { width: 10px; height: 6px; }
.ab { width: 18px; height: 12px; }
.lk { margin-left: 2px; }

.watermark { position: absolute; right: 7px; bottom: 8px; font: 16px/20px "Liberation Sans", sans-serif; color: rgba(150, 155, 162, .35); pointer-events: none; }
.meter { position: absolute; top: -1px; right: 188px; width: 59px; height: 11px; }
.winctl { position: absolute; top: -1px; right: 15px; }
.winctl svg { width: 104px; height: 28px; }
.ime { position: absolute; top: 84px; right: 75px; height: 23px; display: flex; align-items: center; gap: 6px; padding: 0 3px 0 0; background: #fff; border: 1px solid #8ba4c2; border-left: 0; }
.sogou { width: 30px; height: 28px; margin: -4px -2px 0 -10px; }
.red { position: absolute; border: 3px solid #fb2210; border-radius: 3px; pointer-events: none; }
.r-qty { left: 575px; top: 20px; width: 33px; height: 31px; }
.r-tab { left: 10px; top: -3px; right: 11px; height: 28px; }
.r-tree { left: 71px; top: 301px; width: 95px; height: 24px; }
.arrow { position: absolute; left: 171px; top: 169px; width: 236px; height: 136px; pointer-events: none; }
```
